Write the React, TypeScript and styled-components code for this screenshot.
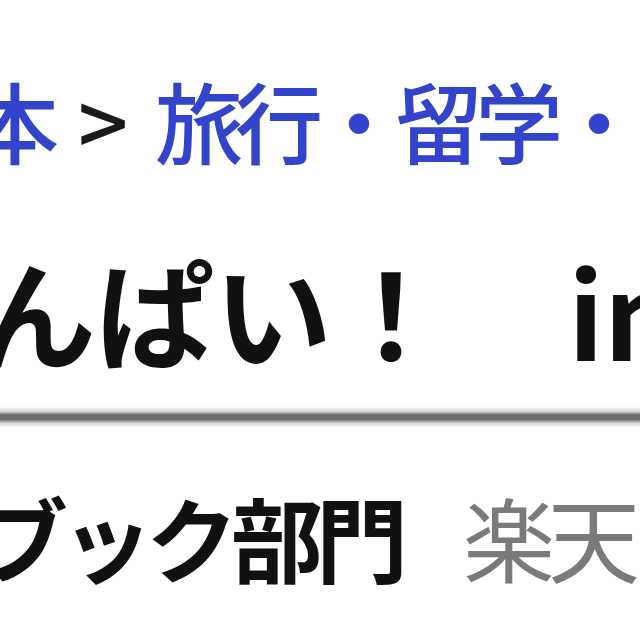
import styled, { createGlobalStyle } from 'styled-components'

const GlobalStyle = createGlobalStyle`
  html, body {
    margin: 0;
    padding: 0;
    background: #ffffff;
    overflow: hidden;
  }
  body {
    font-family: "Noto Sans CJK JP", "Noto Sans", sans-serif;
  }
`

const StyledPage = styled.div`
  width: 640px;
  height: 640px;
  overflow: hidden;
  padding-top: 75px;
  box-sizing: border-box;
  display: flex;
  flex-direction: column;
`

/* Each line is wider than the view; the left part is pushed out of frame */
const StyledLine = styled.div<{ $size: number; $track: number; $shift: number }>`
  display: block;
  white-space: nowrap;
  font-size: ${(p) => p.$size}px;
  line-height: ${(p) => p.$size}px;
  letter-spacing: ${(p) => p.$track}px;
  margin-left: ${(p) => p.$shift}px;
`

const StyledBreadcrumbs = styled(StyledLine)`
  font-weight: 500;
  color: #3344cc;
`

const StyledSep = styled.span`
  display: inline-block;
  width: 104px;
  text-align: center;
  letter-spacing: 0;
  color: #1a1a1a;
`

const StyledTitle = styled(StyledLine)`
  margin-top: 88px;
  font-weight: 700;
  color: #111111;
`

const StyledRule = styled.div`
  margin-top: 38px;
  height: 20px;
  width: 100%;
  flex-shrink: 0;
  background: linear-gradient(
    to bottom,
    #ffffff 0%,
    #d4d4d4 22%,
    #6c6c6c 40%,
    #6c6c6c 62%,
    #d4d4d4 80%,
    #ffffff 100%
  );
`

const StyledAward = styled(StyledLine)`
  margin-top: 63px;
  font-weight: 700;
  color: #111111;
`

const StyledSource = styled.span`
  margin-left: 62px;
  font-weight: 400;
  color: #7a7a7a;
`

const App: React.FC = () => {
  return (
    <>
      <GlobalStyle />
      <StyledPage>
        <StyledBreadcrumbs $size={88} $track={-8} $shift={-29}>
          本<StyledSep>&gt;</StyledSep>旅行・留学・アウトドア
        </StyledBreadcrumbs>

        <StyledTitle $size={118} $track={0} $shift={-22}>
          んぱい！　in Japan
        </StyledTitle>

        <StyledRule />

        <StyledAward $size={92} $track={-7} $shift={-24}>
          ブック部門
          <StyledSource>楽天ブックス</StyledSource>
        </StyledAward>
      </StyledPage>
    </>
  )
}

export default App
